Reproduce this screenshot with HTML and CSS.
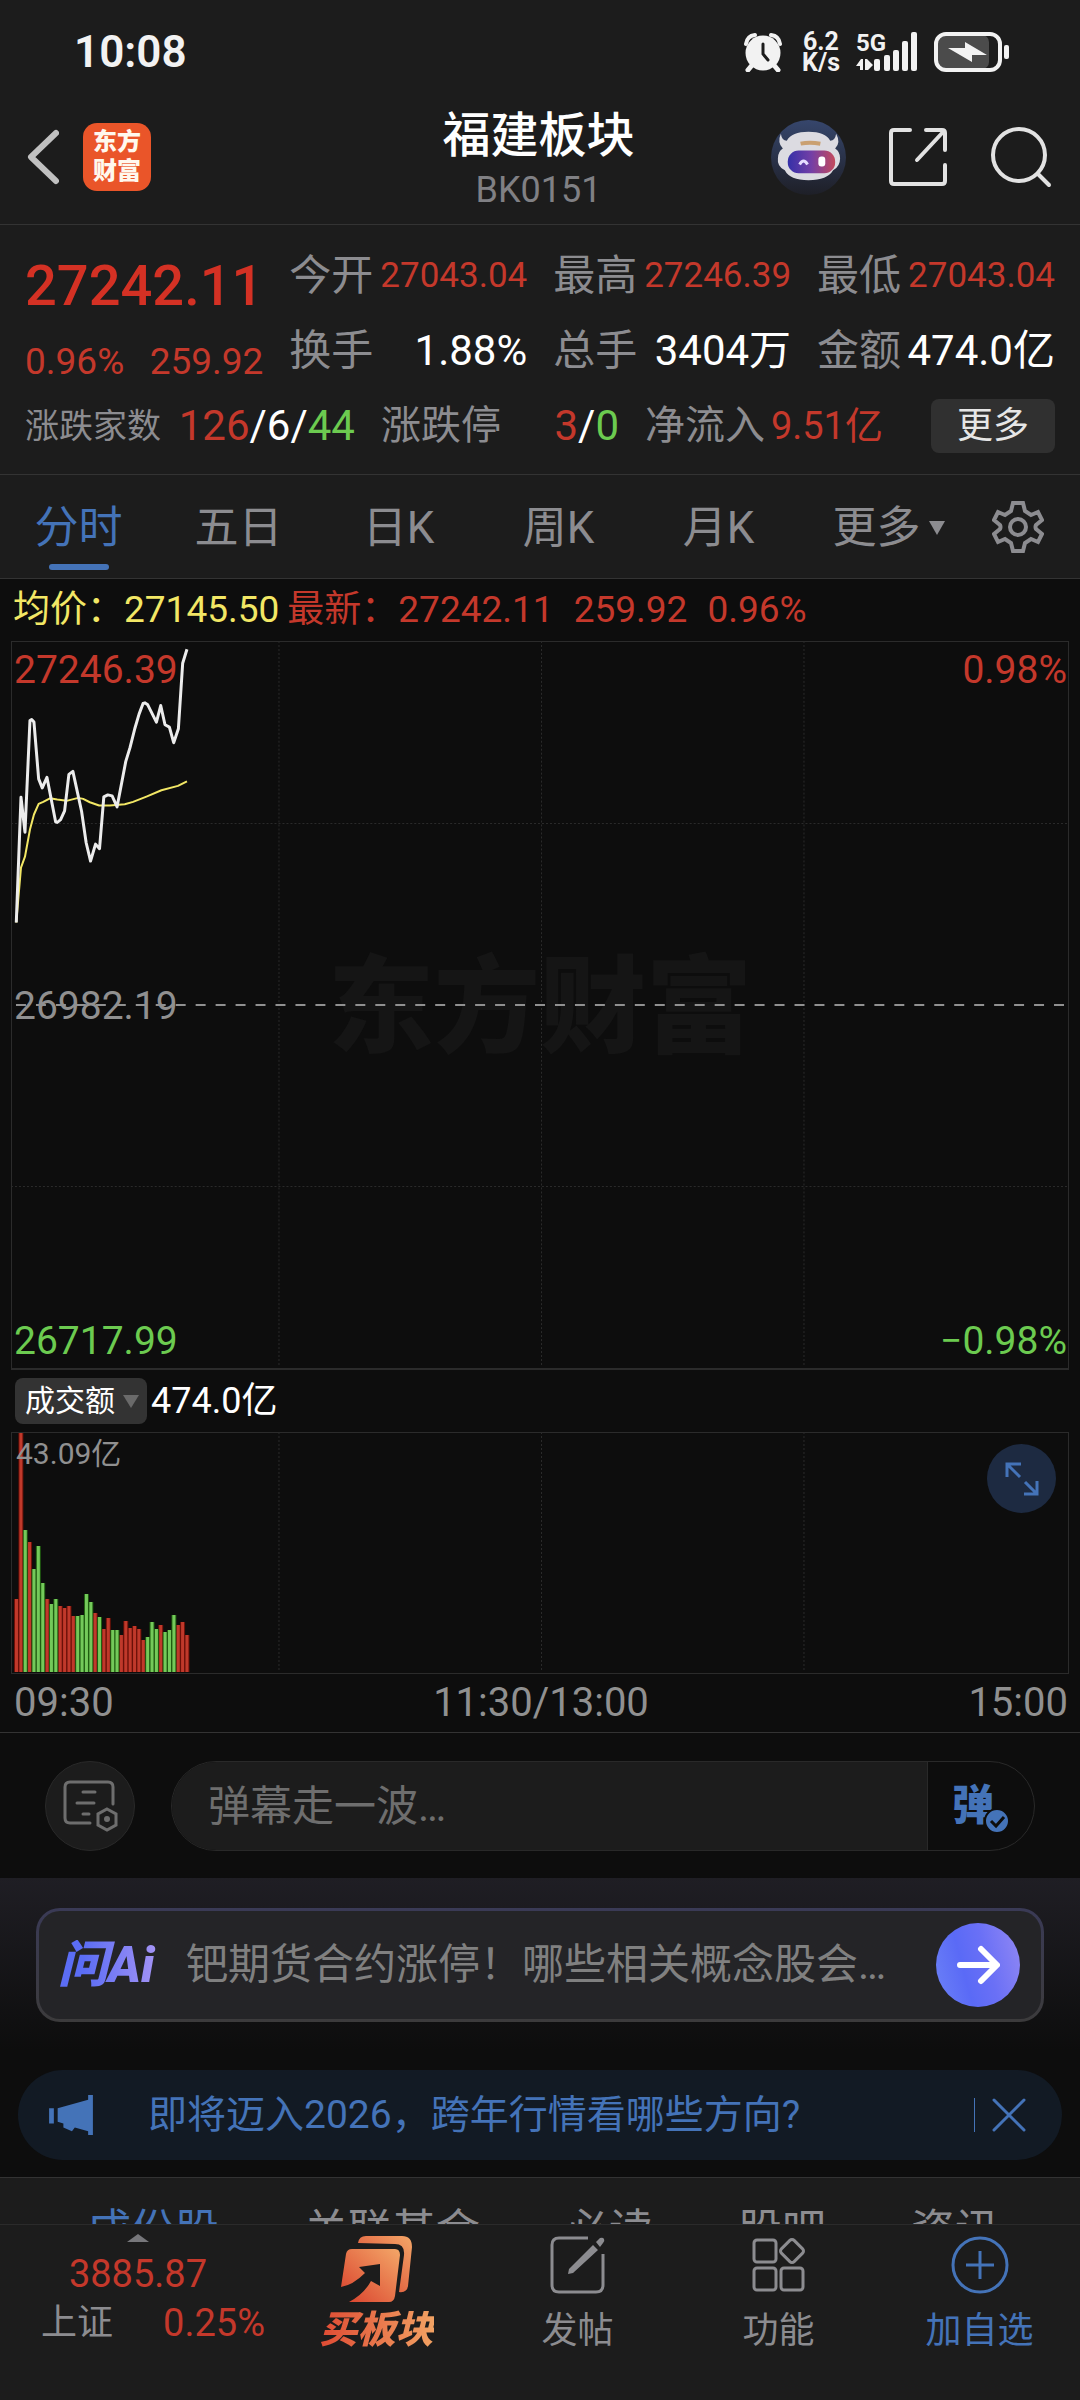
FILE: index.html
```html
<!DOCTYPE html>
<html lang="zh-CN">
<head>
<meta charset="utf-8">
<meta name="viewport" content="width=device-width, initial-scale=1">
<title>福建板块 BK0151</title>
<link rel="stylesheet" href="styles.css">
</head>
<body>
<div class="app">
  <div class="status">
    <span class="clock">10:08</span>
    <div class="status-icons">
      <svg width="38" height="40" viewBox="0 0 38 40" aria-hidden="true">
        <path d="M2 12Q3 4 11 3M36 12Q35 4 27 3" fill="none" stroke="#f2f2f2" stroke-width="4" stroke-linecap="round"/>
        <path d="M9 32l-5 6M29 32l5 6" stroke="#f2f2f2" stroke-width="5" stroke-linecap="round"/>
        <circle cx="19" cy="21" r="17.500" fill="#f2f2f2"/>
        <path d="M19 12v10l5 6" fill="none" stroke="#1c1c1c" stroke-width="3" stroke-linecap="round"/>
      </svg>
      <span class="netspeed">6.2<br>K/s</span>
      <span class="signal">
        <span class="signal-type">5G</span>
        <svg width="62" height="40" viewBox="0 0 62 40" aria-hidden="true">
          <g fill="#f2f2f2"><rect x="18" y="27" width="6" height="12" rx="2"/><rect x="28" y="23" width="6" height="16" rx="2"/><rect x="37" y="18" width="6" height="21" rx="2"/><rect x="46" y="9" width="6" height="30" rx="2"/><rect x="55" y="0" width="6" height="39" rx="2"/><path d="M0 34l5-7h2v11H4v-4zM9 27h2l6 6-5 5H9z"/></g>
        </svg>
      </span>
      <svg width="76" height="40" viewBox="0 0 76 40" aria-hidden="true">
        <rect x="4" y="3" width="51" height="34" rx="7" fill="#4b4b4b"/>
        <rect x="2" y="2" width="64" height="36" rx="10" fill="none" stroke="#f2f2f2" stroke-width="4"/>
        <rect x="70" y="13" width="5" height="14" rx="2" fill="#f2f2f2"/>
        <path d="M14 16l17 0v-6l22 13H38v7z" fill="#f2f2f2"/>
      </svg>
    </div>
  </div>

  <header class="header">
    <div class="header-left">
      <button class="icon-btn" aria-label="返回"><svg width="34" height="56" viewBox="0 0 34 56"><path d="M31 4L6 28l25 24" fill="none" stroke="#c0c0c0" stroke-width="6" stroke-linecap="round" stroke-linejoin="round"/></svg></button>
      <a class="brand" href="#">东方<br>财富</a>
    </div>
    <div class="header-title">
      <h1>福建板块</h1>
      <span class="code">BK0151</span>
    </div>
    <div class="header-right">
      <button class="icon-btn" aria-label="智能助手">
        <svg width="75" height="75" viewBox="0 0 76 76">
          <defs>
            <linearGradient id="rb" x1="0" y1="0" x2="0" y2="1"><stop offset="0" stop-color="#36466c"/><stop offset="1" stop-color="#1e1f27"/></linearGradient>
            <linearGradient id="rv" x1="0" y1="0" x2="1" y2="0"><stop offset="0" stop-color="#3530a8"/><stop offset=".5" stop-color="#743fa6"/><stop offset="1" stop-color="#c44a5c"/></linearGradient>
          </defs>
          <circle cx="38" cy="38" r="38" fill="url(#rb)"/>
          <path d="M10 14q-4 9 2 15-5 3-5 10-1 8 7 12 5 10 24 10t25-10q7-4 7-12 0-7-5-10 6-6 1-15-1 7-6 7-5-9-22-9T16 21q-5 0-6-7z" fill="#dcdbe1"/>
          <rect x="17" y="31" width="48" height="23" rx="11" fill="url(#rv)"/>
          <path d="M30 24q9-2 20 0" stroke="#caa071" stroke-width="4" fill="none"/>
          <path d="M29 45q4-7 8 0" stroke="#e6dcff" stroke-width="3" fill="none"/>
          <rect x="48" y="37" width="7" height="10" rx="3" fill="#fff"/>
        </svg>
      </button>
      <button class="icon-btn" aria-label="分享"><svg width="60" height="60" viewBox="0 0 60 60"><path d="M22 3H6q-3 0-3 3v48q0 3 3 3h48q3 0 3-3V38M38 3h16q3 0 3 3v17M56 4L29 33" fill="none" stroke="#e2e2e2" stroke-width="4" stroke-linecap="round"/></svg></button>
      <button class="icon-btn" aria-label="搜索"><svg width="62" height="62" viewBox="0 0 62 62"><circle cx="29" cy="29" r="26" fill="none" stroke="#e2e2e2" stroke-width="4"/><path d="M48 48l11 11" stroke="#e2e2e2" stroke-width="4" stroke-linecap="round"/></svg></button>
    </div>
  </header>

  <main class="content">
    <section class="quote">
      <div class="quote-main">
        <div class="price">27242.11</div>
        <div class="change"><span>0.96%</span><span>259.92</span></div>
      </div>
      <dl class="stat"><dt>今开</dt><dd class="red small">27043.04</dd></dl>
      <dl class="stat"><dt>最高</dt><dd class="red small">27246.39</dd></dl>
      <dl class="stat"><dt>最低</dt><dd class="red small">27043.04</dd></dl>
      <dl class="stat"><dt>换手</dt><dd>1.88%</dd></dl>
      <dl class="stat"><dt>总手</dt><dd>3404万</dd></dl>
      <dl class="stat"><dt>金额</dt><dd>474.0亿</dd></dl>
      <div class="quote-extra">
        <dl class="stat tiny"><dt>涨跌家数</dt><dd><span class="red">126</span>/6/<span class="green">44</span></dd></dl>
        <dl class="stat mid"><dt>涨跌停</dt><dd><span class="red">3</span>/<span class="green">0</span></dd></dl>
        <dl class="stat mid"><dt>净流入</dt><dd class="red flow">9.51亿</dd></dl>
        <button class="more">更多</button>
      </div>
    </section>

    <nav class="periods">
      <a class="active" href="#">分时</a>
      <a href="#">五日</a>
      <a href="#">日K</a>
      <a href="#">周K</a>
      <a href="#">月K</a>
      <a class="period-more" href="#">更多<svg width="16" height="14" viewBox="0 0 16 14" aria-hidden="true"><path d="M0 0h16L8 14z" fill="#8c8c90"/></svg></a>
      <button class="icon-btn gear" aria-label="设置"><svg width="52" height="54" viewBox="0 0 52 54"><path d="M21 3h10l2 8 6 4 7-3 4 8-6 5q-1 2 0 4l6 5-4 8-7-3-6 4-2 8H21l-2-8-6-4-7 3-4-8 6-5q1-2 0-4l-6-5 4-8 7 3 6-4z" fill="none" stroke="#8c8c90" stroke-width="4"/><circle cx="26" cy="27" r="8" fill="none" stroke="#8c8c90" stroke-width="4"/></svg></button>
    </nav>

    <section class="charts">
      <div class="legend">
        <span class="yellow">均价：27145.50</span>
        <span class="red">最新：27242.11</span>
        <span class="red wide">259.92</span>
        <span class="red">0.96%</span>
      </div>
      <div class="plot price-plot">
        <span class="watermark">东方财富</span>
        <svg class="plot-svg" viewBox="0 0 1058 728" preserveAspectRatio="none" aria-label="分时走势">
          <path d="M0 183H1058M0 547H1058M268.500 0V728M531.500 0V728M794.500 0V728" stroke="#2b2b2b" stroke-dasharray="2 2"/>
          <path d="M5 365H1058" stroke="#909090" stroke-width="2" stroke-dasharray="10 10"/>
          <path fill="none" stroke="#f2e765" stroke-width="2" stroke-linejoin="round" d="M5.300 282.300L10 227.300 14 216.300 19 189 23 174 27.700 163.300 32.300 161.300 39 157.700 46.300 159 55.700 160.300 67.300 157.300 72.300 158.300 79 161.700 88.300 165 99 165 114 163.700 122.300 161.300 135.700 156 150.700 149.700 167.300 145.300 176.300 140.700"/>
          <path fill="none" stroke="#ececec" stroke-width="3" stroke-linejoin="round" d="M5.300 282.300L10 156.700 14 191.700 19 79.700 20.700 78.700 23 81.300 27.700 138.300 31.300 147.300 36 136.700 44.700 181.300 46.300 182 49.700 179 53.700 170.300 58 133.700 62 130.700 70.700 170.700 75.300 202.300 79.700 220.700 84.700 203.700 88.700 208.300 93 156.300 97 154.300 101.300 155.300 106.300 166.300 115 120.700 119.300 106.700 124 88 128.300 73.300 132.300 62.700 134.300 62 137 64 145.700 81.300 150 64.700 154.300 84 158.700 86.300 163 102 167.700 88 172 22.300 176.300 8.300"/>
        </svg>
        <div class="scale">
          <div class="red"><span>27246.39</span><span>0.98%</span></div>
          <div class="muted"><span>26982.19</span></div>
          <div class="green"><span>26717.99</span><span>−0.98%</span></div>
        </div>
      </div>
      <div class="indicator">
        <button class="indicator-btn">成交额<svg width="16" height="13" viewBox="0 0 16 13" aria-hidden="true"><path d="M0 0h16L8 13z" fill="#6a6a6a"/></svg></button>
        <span>474.0亿</span>
      </div>
      <div class="plot volume-plot">
        <svg class="plot-svg" viewBox="0 0 1058 240" preserveAspectRatio="none" aria-label="成交额">
          <path d="M268.500 0V240M531.500 0V240M794.500 0V240" stroke="#2b2b2b" stroke-dasharray="2 2"/>
          <defs>
            <path id="up" d="M5.500 240V167M9.900 240V1M18.600 240V110M36.200 240V167M49.300 240V174M53.700 240V176M58.100 240V174M62.400 240V184M84.300 240V181M93.100 240V197M97.500 240V186M110.600 240V203M115 240V189M119.400 240V196M123.800 240V194M128.100 240V197M132.500 240V208M150 240V193M167.600 240V193M171.900 240V190M176.300 240V203"/>
            <path id="down" d="M14.300 240V98M23 240V137M27.400 240V114M31.800 240V151M40.500 240V172M44.900 240V167M66.800 240V184M71.200 240V183M75.600 240V162M80 240V170M88.700 240V185M101.900 240V198M106.200 240V198M136.900 240V205M141.300 240V190M145.700 240V197M154.400 240V200M158.800 240V198M163.200 240V183"/>
          </defs>
          <use href="#up" stroke="#6a1008" stroke-width="5"/>
          <use href="#down" stroke="#1f5c10" stroke-width="5"/>
          <use href="#up" stroke="#c0392b" stroke-width="3"/>
          <use href="#down" stroke="#74c95a" stroke-width="3"/>
        </svg>
        <span class="volume-max">43.09亿</span>
        <button class="expand" aria-label="全屏"><svg width="34" height="34" viewBox="0 0 34 34"><path d="M2 15V2h14M2 2l13 13M32 19v13H19M32 32L20 20" fill="none" stroke="#4473b8" stroke-width="3"/></svg></button>
      </div>
      <div class="times"><span>09:30</span><span>11:30/13:00</span><span>15:00</span></div>
    </section>

    <section class="danmaku">
      <button class="danmaku-set" aria-label="弹幕设置"><svg width="56" height="52" viewBox="0 0 56 52"><path d="M28 43H8q-5 0-5-5V7q0-5 5-5h38q5 0 5 5v17M21 12h12M15 23h17M21 34h6" fill="none" stroke="#6e6e6e" stroke-width="3" stroke-linecap="round"/><path d="M45 29l9 5v11l-9 5-9-5V34z" fill="none" stroke="#6e6e6e" stroke-width="3"/><circle cx="45" cy="39" r="3" fill="#6e6e6e"/></svg></button>
      <div class="danmaku-bar">
        <input type="text" aria-label="弹幕" placeholder="弹幕走一波…">
        <button class="danmaku-toggle"><span>弹</span><svg class="tick" width="26" height="26" viewBox="0 0 26 26" aria-hidden="true"><circle cx="13" cy="13" r="12" fill="#4473b8" stroke="#0d0d0d" stroke-width="2"/><path d="M7 13l5 5 8-9" fill="none" stroke="#0d0d0d" stroke-width="3"/></svg></button>
      </div>
    </section>

    <section class="ai">
      <div class="ai-box">
        <span class="ai-logo">问Ai</span>
        <span class="ai-text">钯期货合约涨停！哪些相关概念股会…</span>
        <button class="ai-go" aria-label="提问"><svg width="44" height="40" viewBox="0 0 44 40"><path d="M4 20h36M25 4l16 16-16 16" fill="none" stroke="#fff" stroke-width="6" stroke-linecap="round" stroke-linejoin="round"/></svg></button>
      </div>
    </section>

    <section class="notice">
      <svg width="46" height="40" viewBox="0 0 46 42" aria-hidden="true"><path d="M0 14h5v16H0zM9 14l32-9V0h5v42h-5v-4l-14-4-3 4-9-4v-4l-6-2z" fill="#4473b8"/></svg>
      <a href="#">即将迈入2026，跨年行情看哪些方向?</a>
      <button class="close" aria-label="关闭"><svg width="34" height="34" viewBox="0 0 34 34"><path d="M2 2l30 30M32 2L2 32" stroke="#4473b8" stroke-width="3" stroke-linecap="round"/></svg></button>
    </section>

    <nav class="sections">
      <a class="active" href="#">成份股</a>
      <a href="#">关联基金</a>
      <a href="#">必读</a>
      <a href="#">股吧</a>
      <a href="#">资讯</a>
    </nav>
  </main>

  <footer class="dock">
    <a class="index" href="#">
      <svg width="22" height="8" viewBox="0 0 22 8" aria-hidden="true"><path d="M11 0l11 8H0z" fill="#77777b"/></svg>
      <span class="index-value red">3885.87</span>
      <span class="index-row"><span class="index-name">上证</span><span class="red">0.25%</span></span>
    </a>
    <a class="dock-item buy" href="#">
      <svg width="72" height="66" viewBox="0 0 72 66" aria-hidden="true">
        <defs><linearGradient id="bg1" x1="0" y1="1" x2="1" y2="0"><stop offset="0" stop-color="#d9402c"/><stop offset="1" stop-color="#f4a768"/></linearGradient></defs>
        <path d="M17 7q1-7 8-7h36q10 0 10 11l-4 39q-1 7-9 6l5-37q1-11-9-11z" fill="url(#bg1)"/>
        <path d="M5 18q1-5 6-5h43q5 0 5 6l-5 41q-1 6-6 6H8q15-8 22-21l9 5V28l-21 3 6 6Q12 49 0 51z" fill="url(#bg1)"/>
      </svg>
      <span>买板块</span>
    </a>
    <a class="dock-item" href="#">
      <svg width="56" height="58" viewBox="0 0 56 58" aria-hidden="true"><path d="M38 2H9Q2 2 2 9v40q0 7 7 7h37q7 0 7-7V18" fill="none" stroke="#8c8c90" stroke-width="3"/><path d="M43 9l5 5-25 23-5 1 1-5zM46 6l4-4q3-1 4 1t-1 4l-3 4z" fill="#8c8c90"/></svg>
      <span>发帖</span>
    </a>
    <a class="dock-item" href="#">
      <svg width="54" height="58" viewBox="0 0 54 58" aria-hidden="true"><g fill="none" stroke="#8c8c90" stroke-width="3"><rect x="2" y="4" width="22" height="22" rx="3"/><rect x="2" y="32" width="22" height="22" rx="3"/><rect x="29" y="32" width="22" height="22" rx="3"/><rect x="31" y="6" width="18" height="18" rx="3" transform="rotate(45 40 15)"/></g></svg>
      <span>功能</span>
    </a>
    <a class="dock-item add" href="#">
      <svg width="58" height="58" viewBox="0 0 58 58" aria-hidden="true"><circle cx="29" cy="29" r="27" fill="none" stroke="#4473b8" stroke-width="3"/><path d="M29 15v28M15 29h28" stroke="#4473b8" stroke-width="3"/></svg>
      <span>加自选</span>
    </a>
  </footer>
</div>
</body>
</html>
```
FILE: styles.css
```css
:root {
  --panel: #1c1c1c;
  --dark: #0d0d0d;
  --line: #333333;
  --grey: #8c8c90;
  --red: #c4382b;
  --green: #6ccb50;
  --blue: #4473b8;
}

* { box-sizing: border-box; }

body {
  margin: 0;
  background: var(--dark);
  color: #ffffff;
  font-family: Roboto, "Noto Sans CJK SC", sans-serif;
  font-size: 42px;
  line-height: 1;
}

a { color: inherit; text-decoration: none; }
h1, dl, dd, dt { margin: 0; font-weight: 400; }
svg { display: block; flex: none; }

button {
  border: 0;
  padding: 0;
  background: none;
  color: inherit;
  font: inherit;
}

.red { color: var(--red); }
.green { color: var(--green); }
.yellow { color: #f2e765; }
.muted { color: #909090; }

.app {
  display: flex;
  flex-direction: column;
  height: 100vh;
}

/* Status bar */
.status {
  display: flex;
  flex: none;
  justify-content: space-between;
  align-items: center;
  height: 102px;
  padding: 2px 70px 0 74px;
  background: var(--panel);
  color: #f2f2f2;
}
.clock { font-size: 44px; font-weight: 600; }
.status-icons { display: flex; align-items: center; gap: 16px; }
.netspeed {
  padding-left: 4px;
  font-size: 25px;
  line-height: 21px;
  font-weight: 700;
  text-align: center;
}
.signal { position: relative; }
.signal-type {
  position: absolute;
  left: 0;
  top: -1px;
  font-size: 24px;
  line-height: 24px;
  font-weight: 700;
}

/* Header */
.header {
  display: grid;
  flex: none;
  grid-template-columns: 1fr auto 1fr;
  height: 123px;
  padding: 0 28px 0 25px;
  background: var(--panel);
  border-bottom: 1px solid var(--line);
}
.header-left { display: flex; align-items: center; gap: 24px; padding-bottom: 12px; }
.header-right { display: flex; align-items: center; justify-content: flex-end; gap: 42px; padding-bottom: 12px; }
.brand {
  width: 68px;
  padding: 5px 0;
  border-radius: 14px;
  background: #ea5529;
  color: #fff8ee;
  font-size: 24px;
  line-height: 29px;
  font-weight: 900;
  text-align: center;
}
.header-title { text-align: center; padding-top: 4px; }
.header-title h1 { font-size: 48px; line-height: 60px; font-weight: 500; }
.code { display: block; color: #808084; font-size: 36px; line-height: 48px; }

.content { flex: 1; min-height: 0; overflow: hidden; }

/* Quote */
.quote {
  display: grid;
  grid-template-columns: repeat(4, 1fr);
  grid-auto-rows: 75px;
  column-gap: 26px;
  padding: 13px 25px 11px;
  background: var(--panel);
  border-bottom: 1px solid var(--line);
}
.quote-main { grid-row: span 2; }
.price { color: #d43124; font-size: 56px; line-height: 96px; font-weight: 500; }
.change {
  display: flex;
  justify-content: space-between;
  color: var(--red);
  font-size: 37px;
  line-height: 56px;
}
.stat { display: flex; justify-content: space-between; align-items: center; white-space: nowrap; }
.stat dt { color: var(--grey); }
.stat .small { font-size: 35px; }
.stat.tiny dt { font-size: 34px; }
.stat.mid dt { font-size: 40px; }
.stat .flow { font-size: 38px; }
.quote-extra {
  grid-column: 1 / -1;
  display: grid;
  grid-template-columns: 330fr 238fr 238fr 146fr;
  column-gap: 26px;
  align-items: center;
}
.more {
  justify-self: end;
  width: 124px;
  height: 54px;
  border-radius: 8px;
  background: #303030;
  color: #e6e6e6;
  font-size: 36px;
}

/* Period tabs */
.periods {
  display: grid;
  grid-template-columns: repeat(5, 160fr) 180fr 100fr;
  height: 104px;
  background: var(--panel);
  border-bottom: 1px solid var(--line);
  color: var(--grey);
  font-size: 44px;
}
.periods a { display: flex; align-items: center; justify-content: center; padding: 2px 3px 0 0; }
.periods .active { position: relative; color: var(--blue); }
.periods .active::after {
  content: "";
  position: absolute;
  bottom: 8px;
  width: 60px;
  height: 6px;
  border-radius: 3px;
  background: var(--blue);
}
.period-more { gap: 8px; }
.gear { padding-left: 12px; }

/* Charts */
.charts { border-bottom: 1px solid var(--line); }
.legend {
  display: flex;
  gap: 8px;
  padding: 1px 13px;
  font-size: 37px;
  line-height: 60px;
  white-space: nowrap;
}
.legend .wide { padding: 0 12px; }
.plot { position: relative; margin: 0 11px; border: 1px solid #2b2b2b; }
.price-plot { height: 729px; border-bottom-width: 2px; }
.volume-plot { height: 242px; }
.plot-svg { position: absolute; left: -1px; top: -1px; width: 100%; height: 100%; }
.watermark {
  position: absolute;
  inset: 0;
  display: flex;
  align-items: center;
  justify-content: center;
  padding-top: 6px;
  color: #151515;
  font-size: 106px;
  font-weight: 900;
}
.scale {
  position: relative;
  display: flex;
  flex-direction: column;
  justify-content: space-between;
  height: 100%;
  padding: 1px 1px 0 2px;
  font-size: 39px;
  line-height: 54px;
}
.scale div { display: flex; justify-content: space-between; }
.indicator {
  display: flex;
  align-items: center;
  gap: 4px;
  height: 62px;
  padding: 0 15px;
  font-size: 36px;
}
.indicator-btn {
  display: flex;
  align-items: center;
  gap: 8px;
  height: 46px;
  padding: 0 8px 0 10px;
  border-radius: 8px;
  background: #333333;
  font-size: 30px;
}
.volume-max { position: absolute; left: 4px; top: 2px; color: #909090; font-size: 30px; line-height: 38px; }
.expand {
  position: absolute;
  right: 12px;
  top: 11px;
  display: grid;
  place-items: center;
  width: 69px;
  height: 69px;
  border-radius: 50%;
  background: #1d2a41;
}
.times {
  display: flex;
  justify-content: space-between;
  padding: 0 12px 0 14px;
  color: #909090;
  font-size: 40px;
  line-height: 58px;
}

/* Comment bar */
.danmaku { display: flex; gap: 36px; padding: 28px 45px 27px; }
.danmaku-set {
  display: grid;
  place-items: center;
  width: 90px;
  height: 90px;
  border: 1px solid #292929;
  border-radius: 50%;
  background: var(--panel);
}
.danmaku-bar {
  flex: 1;
  display: flex;
  height: 90px;
  overflow: hidden;
  border: 1px solid #292929;
  border-radius: 45px;
}
.danmaku-bar input {
  flex: 1;
  min-width: 0;
  padding: 0 36px;
  border: 0;
  border-right: 1px solid #292929;
  background: var(--panel);
  color: #ffffff;
  font: inherit;
}
.danmaku-bar input::placeholder { color: #6e6e6e; opacity: 1; }
.danmaku-toggle {
  position: relative;
  width: 106px;
  padding-right: 16px;
  color: var(--blue);
  font-size: 42px;
  font-weight: 900;
}
.tick { position: absolute; right: 24px; bottom: 16px; }

/* AI question */
.ai { padding: 30px 36px 48px; background: linear-gradient(#1f1e24, var(--dark) 90%); }
.ai-box {
  display: flex;
  align-items: center;
  height: 114px;
  padding: 0 21px 0 19px;
  border: 3px solid transparent;
  border-radius: 24px;
  background: linear-gradient(#242427, #242427) padding-box, linear-gradient(#3a3a56, #3c3b3c) border-box;
}
.ai-logo {
  width: 128px;
  background: linear-gradient(90deg, #5b6df5 20%, #a795f5 80%);
  background-clip: text;
  color: transparent;
  font-size: 50px;
  font-weight: 900;
  font-style: italic;
}
.ai-text { flex: 1; color: #808080; white-space: nowrap; }
.ai-go {
  display: grid;
  place-items: center;
  width: 84px;
  height: 84px;
  border-radius: 50%;
  background: linear-gradient(75deg, #6c82f7, #5a6af6 35%, #6a70f6 60%, #9389f4);
}

/* Notice */
.notice {
  display: flex;
  align-items: center;
  height: 90px;
  margin: 0 18px 17px;
  padding: 0 36px 0 30px;
  border-radius: 45px;
  background: #121a24;
  color: var(--blue);
  font-size: 39px;
}
.notice a { flex: 1; padding-left: 54px; white-space: nowrap; }
.close { padding-left: 17px; border-left: 1px solid var(--blue); }

/* Section tabs */
.sections {
  display: flex;
  gap: 85px;
  height: 110px;
  padding: 28px 87px;
  background: var(--panel);
  border-top: 1px solid var(--line);
  color: var(--grey);
  font-size: 44px;
  line-height: 50px;
  white-space: nowrap;
}
.sections .active { color: var(--blue); }

/* Bottom dock */
.dock {
  display: grid;
  flex: none;
  grid-template-columns: 276fr repeat(4, 201fr);
  height: 176px;
  background: var(--panel);
  border-top: 1px solid #2b2b2b;
  color: var(--grey);
  font-size: 36px;
}
.index { display: flex; flex-direction: column; align-items: center; padding-top: 9px; font-size: 38px; }
.index-value { padding-top: 7px; line-height: 50px; }
.index-row {
  display: flex;
  justify-content: space-between;
  width: 100%;
  padding: 0 11px 0 41px;
  line-height: 48px;
}
.index-name { font-size: 36px; }
.dock-item { display: flex; flex-direction: column; align-items: center; padding-top: 11px; }
.dock-item svg { height: 58px; }
.dock-item span { padding-top: 12px; line-height: 50px; }
.buy svg { height: 66px; }
.buy span {
  padding-top: 3px;
  background: linear-gradient(90deg, #df4a33, #f2a263);
  background-clip: text;
  color: transparent;
  font-size: 38px;
  font-weight: 900;
  font-style: italic;
}
.add { color: var(--blue); }
```
